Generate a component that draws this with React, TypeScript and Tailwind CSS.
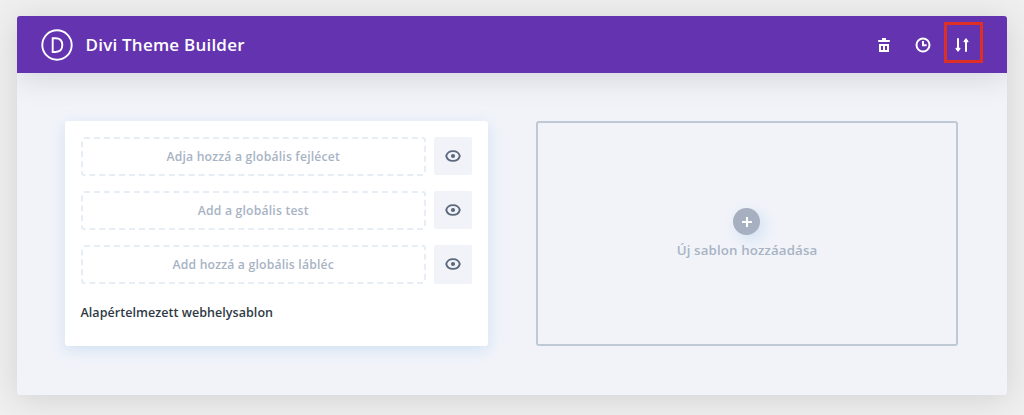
import React from 'react';

const areas = ['Adja hozzá a globális fejlécet', 'Add a globális test', 'Add hozzá a globális lábléc'];

function TrashIcon() {
  return (
    <svg width="12" height="14" viewBox="0 0 12 14" fill="none" stroke="#fff">
      <path d="M4 1h4" strokeWidth="2" />
      <path d="M0.2 3h11.6" strokeWidth="2" />
      <path d="M2 7h8v6H2zM6 7v6" strokeWidth="2" />
    </svg>
  );
}

function ClockIcon() {
  return (
    <svg width="16" height="16" viewBox="0 0 16 16" fill="none" stroke="#fff">
      <circle cx="8" cy="8" r="6.5" strokeWidth="2" />
      <path d="M8 4v4.3h3.6" strokeWidth="2" />
    </svg>
  );
}

function SortIcon() {
  return (
    <svg width="14" height="14" viewBox="0 0 14 14" fill="#fff" stroke="#fff" strokeLinejoin="round" strokeLinecap="round">
      <path d="M3 1v10M11 13V3" strokeWidth="2" />
      <path d="M1 10.400h4l-2 2.700zM9 3.600h4l-2-2.700z" strokeWidth="1.1" />
    </svg>
  );
}

function EyeIcon() {
  return (
    <svg width="16" height="12" viewBox="0 0 16 12" fill="none">
      <path d="M1.2 6C2 3 4.6 1.1 8 1.1s6 1.9 6.8 4.9c-.8 3-3.4 4.900-6.800 4.900S2 9 1.2 6z" stroke="#5c697d" strokeWidth="1.9" />
      <circle cx="8" cy="6" r="2.1" fill="#5c697d" />
    </svg>
  );
}

function AreaRow({ label }: { label: string }) {
  return (
    <div className="flex h-[39px] gap-[7.5px]">
      <div className="flex w-[345.5px] items-center justify-center rounded-[3px] border-2 border-dashed border-[#e7edf4] pt-[2px] text-[12.2px] font-semibold tracking-[0.19px] text-[#a8b3c4]">
        {label}
      </div>
      <button className="flex h-[38.5px] w-[38.5px] items-center justify-center rounded-[2px] bg-[#f1f3f9]">
        <EyeIcon />
      </button>
    </div>
  );
}

export default function App() {
  return (
    <div className="h-[415px] w-[1024px] overflow-hidden bg-[#efefef] px-[16.5px] pt-[16px] font-['Open_Sans',sans-serif]">
      <div className="h-[378.5px] w-[990.5px] overflow-hidden rounded-[3px] bg-[#f1f3f9] shadow-[0_4px_32px_rgba(0,0,0,0.12)]">
        <header className="relative flex h-[56.5px] items-center bg-[#6433b0] pl-[24.5px] pr-[24px] shadow-[0_4px_32px_rgba(0,0,0,0.13)]">
          <svg className="mt-[2px]" width="32" height="32" viewBox="0 0 32 32" fill="none" stroke="#fff" strokeWidth="1.9">
            <circle cx="16" cy="16" r="14.7" />
            <path d="M11.700 9.200h2.800c4.500 0 6.800 2.500 6.800 6.900s-2.300 6.900-6.800 6.900h-2.800z" />
          </svg>
          <h1 className="ml-[12.5px] text-[17px] font-semibold tracking-[0.22px] text-white">Divi Theme Builder</h1>
          <div className="ml-auto flex items-center">
            <button className="mt-[1px]"><TrashIcon /></button>
            <button className="mt-[1px] ml-[25px]"><ClockIcon /></button>
            <button className="-mt-[3px] ml-[12.5px] flex h-[41px] w-[39.500px] items-center justify-center border-[3px] border-[#dc3027] pt-[4px] pr-[2px]">
              <SortIcon />
            </button>
          </div>
        </header>
        <main className="flex gap-[48px] px-[48.5px] pt-[48.5px]">
          <section className="h-[225px] w-[423px] rounded-[3px] bg-white pl-[15.5px] pt-[15.5px] shadow-[0_4px_14px_rgba(165,200,235,0.4)]">
            <div className="flex flex-col gap-[15.3px]">
              {areas.map((label) => <AreaRow key={label} label={label} />)}
            </div>
            <h2 className="mt-[20px] text-[12.5px] leading-[18px] font-semibold tracking-[0.05px] text-[#303a45]">Alapértelmezett webhelysablon</h2>
          </section>
          <button className="flex h-[225px] w-[422px] flex-col items-center rounded-[3px] border-2 border-[#bec9d5] pt-[85px]">
            <span className="mr-[1px] flex size-[27px] items-center justify-center rounded-full bg-[#a6b0c1] shadow-[4px_5px_14px_rgba(165,200,235,0.4)]">
              <svg width="10" height="10" viewBox="0 0 10 10" stroke="#fff" strokeWidth="2">
                <path d="M5 0v10M0 5h10" />
              </svg>
            </span>
            <span className="mt-[4.5px] text-[13.3px] leading-[20px] font-semibold tracking-[0.13px] text-[#a8b3c4]">Új sablon hozzáadása</span>
          </button>
        </main>
      </div>
    </div>
  );
}
